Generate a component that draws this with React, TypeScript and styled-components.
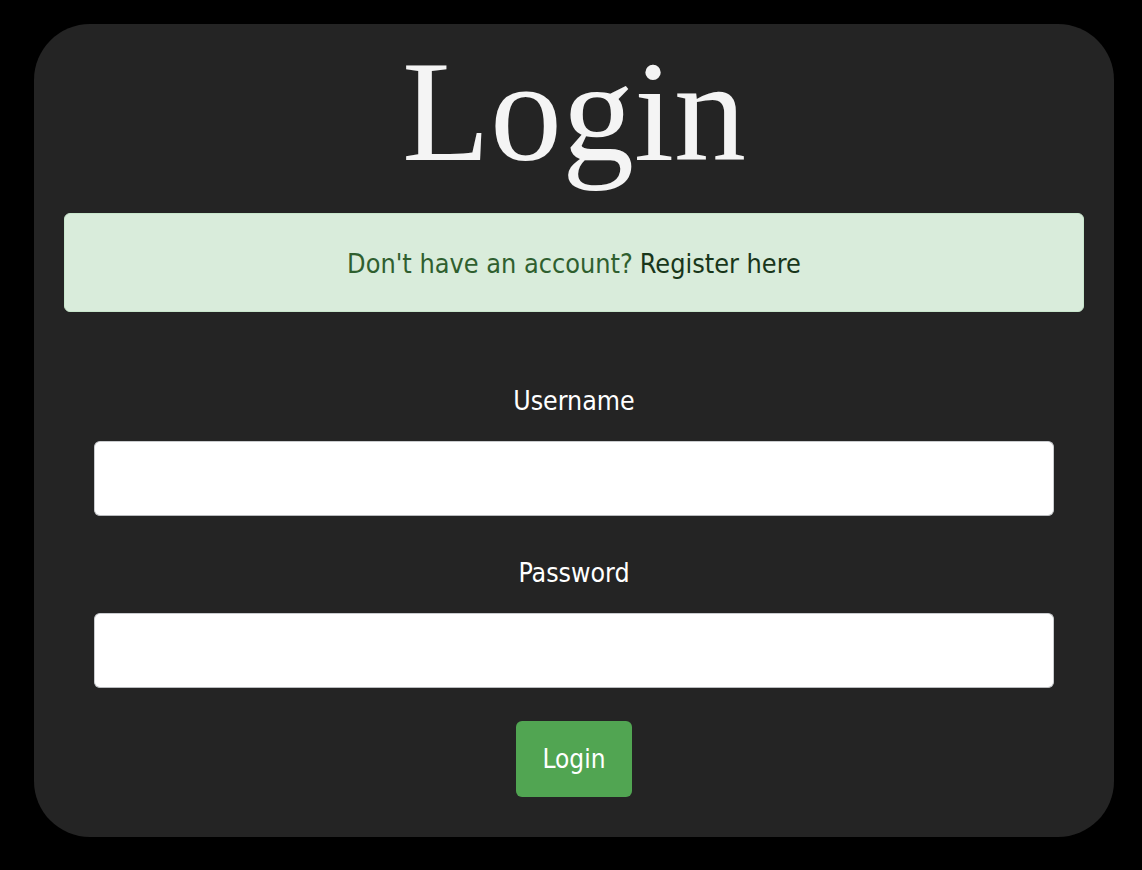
import React from "react";
import styled, { createGlobalStyle } from "styled-components";

const Global = createGlobalStyle`
  html, body { margin: 0; padding: 0; background: #000; }
  body { font-family: "DejaVu Sans Condensed", "Liberation Sans", sans-serif; }
  * { box-sizing: border-box; }
`;

const Page = styled.div`
  width: 1142px;
  height: 870px;
  padding: 24px 28px 0 34px;
`;

const Card = styled.div`
  width: 1080px;
  height: 813px;
  background: #242424;
  border-radius: 56px;
  padding: 16px 30px 0;
  display: flex;
  flex-direction: column;
  align-items: center;
`;

const Title = styled.h1`
  margin: 0;
  font-family: "Liberation Serif", "Times New Roman", serif;
  font-weight: 400;
  font-size: 144px;
  line-height: 144px;
  color: #f4f4f4;
`;

const Alert = styled.div`
  margin-top: 29px;
  width: 100%;
  height: 99px;
  background: #d9ecdb;
  border: 1px solid #c8e6cc;
  border-radius: 6px;
  display: flex;
  align-items: center;
  justify-content: center;
  padding-top: 2px;
  font-size: 26.8px;
  color: #2f5f2f;
`;

const AlertLink = styled.a`
  color: #18361a;
  text-decoration: none;
  margin-left: 7px;
`;

const Form = styled.form`
  width: 960px;
  display: flex;
  flex-direction: column;
  align-items: center;
  margin-top: 69px;
`;

const Label = styled.label<{ $gapTop?: number }>`
  display: block;
  height: 40px;
  line-height: 40px;
  margin-top: ${(p) => p.$gapTop ?? 0}px;
  font-size: 26.5px;
  color: #ffffff;
  text-align: center;
`;

const Input = styled.input`
  margin-top: 20px;
  width: 960px;
  height: 75px;
  border: 1px solid #c9cbce;
  border-bottom-color: #b9bbbe;
  border-radius: 6px;
  background: #fff;
  font-size: 24px;
  padding: 0 16px;
  outline: none;
`;

const Button = styled.button`
  margin-top: 33px;
  width: 116px;
  height: 76px;
  border: none;
  border-radius: 6px;
  background: #51a552;
  color: #fff;
  font-family: inherit;
  font-size: 26px;
  cursor: pointer;
`;

export default function App() {
  return (
    <>
      <Global />
      <Page>
        <Card>
          <Title>Login</Title>
          <Alert>
            Don't have an account?<AlertLink href="#">Register here</AlertLink>
          </Alert>
          <Form onSubmit={(e) => e.preventDefault()}>
            <Label htmlFor="username">Username</Label>
            <Input id="username" type="text" />
            <Label htmlFor="password" $gapTop={37}>Password</Label>
            <Input id="password" type="password" />
            <Button type="submit">Login</Button>
          </Form>
        </Card>
      </Page>
    </>
  );
}
